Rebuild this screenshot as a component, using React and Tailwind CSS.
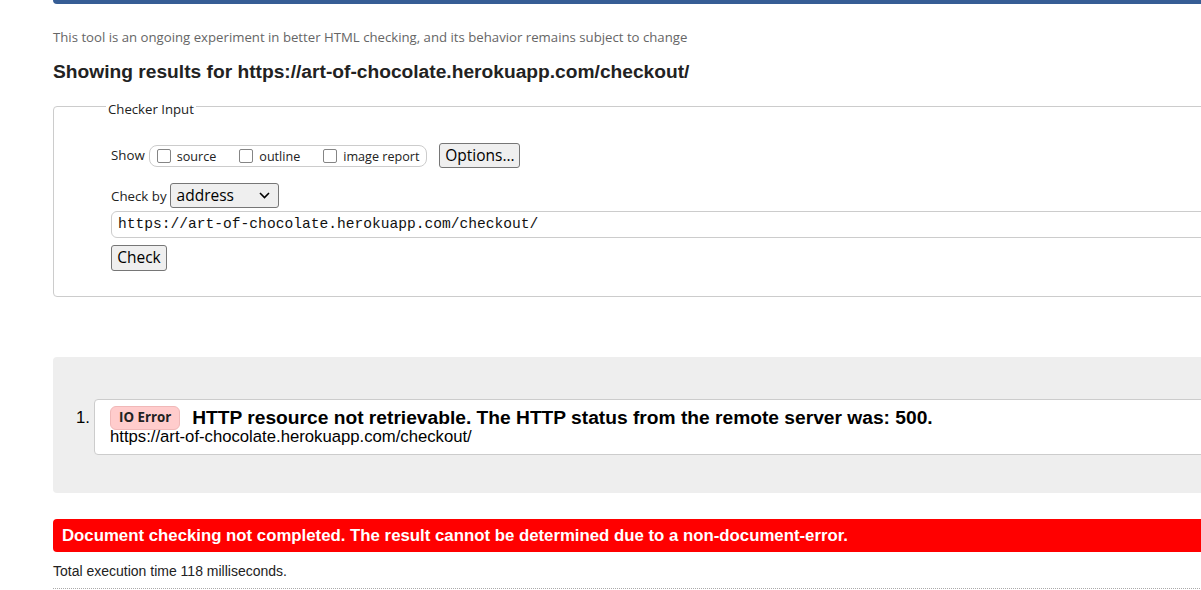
import React from "react";

const seg = { fontFamily: '"Open Sans", "Noto Sans", sans-serif' };

function Box() {
  return <span className="inline-block w-[14px] h-[14px] border-[1.5px] border-[#858585] rounded-[2px] bg-white mr-[6px]" />;
}

export default function App() {
  return (
    <div className="w-[1201px] h-[590px] overflow-hidden bg-white text-black" style={{ fontFamily: '"Liberation Sans", Arial, sans-serif' }}>
      <div className="w-[1400px] pl-[53px]">
        <div className="h-[4px] bg-[#365d95] rounded-bl-[4px]" />
        <p className="mt-[25px] text-[13.2px] leading-[16px] text-[#666]" style={seg}>
          This tool is an ongoing experiment in better HTML checking, and its behavior remains subject to change
        </p>
        <h2 className="mt-[15px] text-[19.2px] leading-[24px] font-bold text-[#222]">
          Showing results for https://art-of-chocolate.herokuapp.com/checkout/
        </h2>
        <div className="relative mt-[22px] h-[191px] border border-[#ccc] rounded-[4px] pl-[57px]">
          <span className="absolute left-[52px] top-[-6px] bg-white px-[2px] text-[13.2px] leading-[16px] text-[#222]" style={seg}>Checker Input</span>
          <div className="mt-[36px] h-[25px] flex items-center text-[13.3px] text-[#222]" style={seg}>
            <span className="mr-[4px]">Show</span>
            <span className="h-[22px] mt-[1px] flex items-center border border-[#ccc] rounded-[8px] pl-[7px] pr-[7px] text-[12.6px]">
              <label className="flex items-center"><Box /><span className="pt-[2px]">source</span></label>
              <label className="flex items-center ml-[23px]"><Box /><span className="pt-[2px]">outline</span></label>
              <label className="flex items-center ml-[23px]"><Box /><span className="pt-[2px]">image report</span></label>
            </span>
            <button className="ml-[12px] h-[25px] w-[81px] border border-[#767676] rounded-[3px] bg-[#efefef] text-[15.5px] leading-none text-black" style={seg}>Options...</button>
          </div>
          <div className="mt-[15px] h-[25px] flex items-center text-[13.3px] text-[#222]" style={seg}>
            <span className="mr-[3px] pt-[2px]">Check by</span>
            <span className="w-[109px] h-[25px] flex items-center justify-between border border-[#767676] rounded-[3px] bg-[#efefef] pl-[6px] pr-[8px] text-[15.5px] text-black">
              <span>address</span>
              <svg width="11" height="7" viewBox="0 0 11 7" fill="none" stroke="#000" strokeWidth="1.6"><path d="M1 1l4.5 4.5L10 1" /></svg>
            </span>
          </div>
          <div className="mt-[3px] h-[27px] flex items-center border border-[#ccc] rounded-l-[6px] pl-[6px] text-[14.6px] text-[#111]" style={{ fontFamily: '"Liberation Mono", "DejaVu Sans Mono", monospace' }}>
            https://art-of-chocolate.herokuapp.com/checkout/
          </div>
          <button className="mt-[7px] h-[26px] w-[56px] border border-[#767676] rounded-[3px] bg-[#efefef] text-[15.5px] leading-none text-black" style={seg}>Check</button>
        </div>
        <div className="mt-[60px] h-[136px] bg-[#eee] rounded-[4px] pt-[42px]">
          <div className="flex">
            <span className="w-[41px] pr-[4px] text-right text-[16.7px] leading-[18px] pt-[10px]">1.</span>
            <div className="flex-1 h-[56px] bg-white border border-[#ccc] rounded-l-[4px] pl-[15px] pt-[6px]">
              <div className="flex items-center h-[24px]">
                <span className="h-[24px] px-[8px] flex items-center bg-[#fcc] border border-[#f0b8b8] rounded-[6px] text-[13.3px] font-bold text-[#222]" style={seg}>IO Error</span>
                <span className="ml-[12px] text-[19.2px] font-bold leading-[20px]">HTTP resource not retrievable. The HTTP status from the remote server was: 500.</span>
              </div>
              <div className="text-[16.7px] leading-[14px]">https://art-of-chocolate.herokuapp.com/checkout/</div>
            </div>
          </div>
        </div>
        <div className="mt-[26px] h-[33px] bg-[#f00] rounded-l-[4px] pl-[9px] flex items-center text-white font-bold text-[16.8px]">
          Document checking not completed. The result cannot be determined due to a non-document-error.
        </div>
        <p className="mt-[11px] text-[14px] leading-[16px] text-[#222]">Total execution time 118 milliseconds.</p>
        <div className="mt-[9px] border-t border-dotted border-[#aaa]" />
      </div>
    </div>
  );
}
